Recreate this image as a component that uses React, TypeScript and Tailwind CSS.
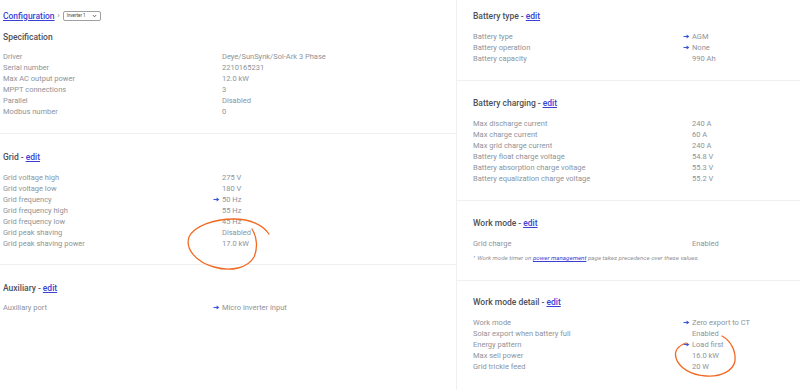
import React from "react";

type Row = { label: string; value: string; arrow?: boolean };

function Arrow() {
  return (
    <svg width="7" height="5" viewBox="0 0 7 5" className="mr-[2px] -ml-[9px] shrink-0">
      <path d="M0.5 2.5 H5" stroke="#3a56d4" strokeWidth="1.1" />
      <path d="M3.6 0.6 L6.4 2.5 L3.6 4.4 Z" fill="#3a56d4" />
    </svg>
  );
}

function Rows({ rows }: { rows: Row[] }) {
  return (
    <div className="flex flex-col">
      {rows.map((r) => (
        <div key={r.label} className="grid grid-cols-[219px_1fr] h-[11px] items-center text-[7.5px] leading-[11px] text-[#8e939a]">
          <div className="whitespace-nowrap">{r.label}</div>
          <div className="flex items-center whitespace-nowrap">
            {r.arrow && <Arrow />}
            <span>{r.value}</span>
          </div>
        </div>
      ))}
    </div>
  );
}

function Heading({ title, edit = true }: { title: string; edit?: boolean }) {
  return (
    <div className="h-[14px] flex items-center text-[8.5px] font-medium text-[#4d515a] whitespace-nowrap">
      <span>{title}</span>
      {edit && (
        <>
          <span className="ml-[2px]">-</span>
          <span className="ml-[2px] text-[#3b3fd6] underline underline-offset-[1px]">edit</span>
        </>
      )}
    </div>
  );
}

export default function App() {
  return (
    <div
      className="relative w-[800px] h-[390px] bg-white overflow-hidden flex"
      style={{ fontFamily: "Roboto, 'Liberation Sans', sans-serif" }}
    >
      {/* Left column */}
      <div className="w-[456px] shrink-0 flex flex-col">
        <div className="px-[3px] pt-[10px] pb-[16px] border-b border-[#f0f0f0]">
          <div className="h-[12px] flex items-center">
            <span className="text-[8.5px] font-medium text-[#3b3fd6] underline underline-offset-[1px]">Configuration</span>
            <span className="ml-[3px] text-[7px] text-[#777]">›</span>
            <div className="ml-[3px] h-[10px] w-[38px] border border-[#a0a0a0] rounded-[2px] flex items-center justify-between px-[3px] text-[4.5px] text-[#444]">
              <span>Inverter 1</span>
              <svg width="5" height="4" viewBox="0 0 5 4">
                <path d="M0.8 1 L2.5 2.8 L4.2 1" stroke="#444" strokeWidth="0.8" fill="none" />
              </svg>
            </div>
          </div>
          <div className="mt-[8px]">
            <Heading title="Specification" edit={false} />
          </div>
          <div className="mt-[7px]">
            <Rows
              rows={[
                { label: "Driver", value: "Deye/SunSynk/Sol-Ark 3 Phase" },
                { label: "Serial number", value: "2210165231" },
                { label: "Max AC output power", value: "12.0 kW" },
                { label: "MPPT connections", value: "3" },
                { label: "Parallel", value: "Disabled" },
                { label: "Modbus number", value: "0" },
              ]}
            />
          </div>
        </div>

        <div className="px-[3px] pt-[16px] pb-[15px] border-b border-[#f0f0f0]">
          <Heading title="Grid" />
          <div className="mt-[8px]">
            <Rows
              rows={[
                { label: "Grid voltage high", value: "275 V" },
                { label: "Grid voltage low", value: "180 V" },
                { label: "Grid frequency", value: "50 Hz", arrow: true },
                { label: "Grid frequency high", value: "55 Hz" },
                { label: "Grid frequency low", value: "45 Hz" },
                { label: "Grid peak shaving", value: "Disabled" },
                { label: "Grid peak shaving power", value: "17.0 kW" },
              ]}
            />
          </div>
        </div>

        <div className="px-[3px] pt-[16px]">
          <Heading title="Auxiliary" />
          <div className="mt-[7px]">
            <Rows rows={[{ label: "Auxiliary port", value: "Micro inverter input", arrow: true }]} />
          </div>
        </div>
      </div>

      {/* Right column */}
      <div className="flex-1 border-l border-[#f0f0f0] flex flex-col">
        <div className="pl-[16px] pt-[9px] pb-[16px] border-b border-[#f0f0f0]">
          <Heading title="Battery type" />
          <div className="mt-[8px]">
            <Rows
              rows={[
                { label: "Battery type", value: "AGM", arrow: true },
                { label: "Battery operation", value: "None", arrow: true },
                { label: "Battery capacity", value: "990 Ah" },
              ]}
            />
          </div>
        </div>

        <div className="pl-[16px] pt-[15px] pb-[16px] border-b border-[#f0f0f0]">
          <Heading title="Battery charging" />
          <div className="mt-[8px]">
            <Rows
              rows={[
                { label: "Max discharge current", value: "240 A" },
                { label: "Max charge current", value: "60 A" },
                { label: "Max grid charge current", value: "240 A" },
                { label: "Battery float charge voltage", value: "54.8 V" },
                { label: "Battery absorption charge voltage", value: "55.3 V" },
                { label: "Battery equalization charge voltage", value: "55.2 V" },
              ]}
            />
          </div>
        </div>

        <div className="pl-[16px] pt-[15px] pb-[16px] border-b border-[#f0f0f0]">
          <Heading title="Work mode" />
          <div className="mt-[8px]">
            <Rows rows={[{ label: "Grid charge", value: "Enabled" }]} />
          </div>
          <div className="mt-[4px] h-[11px] flex items-center text-[6.2px] italic text-[#8e939a] whitespace-nowrap">
            <span className="mr-[2px]">¹</span>
            <span>Work mode timer on&nbsp;</span>
            <span className="text-[#3b3fd6] underline">power management</span>
            <span>&nbsp;page takes precedence over these values.</span>
          </div>
        </div>

        <div className="pl-[16px] pt-[14px]">
          <Heading title="Work mode detail" />
          <div className="mt-[8px]">
            <Rows
              rows={[
                { label: "Work mode", value: "Zero export to CT", arrow: true },
                { label: "Solar export when battery full", value: "Enabled" },
                { label: "Energy pattern", value: "Load first", arrow: true },
                { label: "Max sell power", value: "16.0 kW" },
                { label: "Grid trickle feed", value: "20 W" },
              ]}
            />
          </div>
        </div>
      </div>

      {/* Hand-drawn annotations */}
      <svg className="absolute inset-0 pointer-events-none" width="800" height="390" viewBox="0 0 800 390">
        <path
          d="M269 234 C 263 225, 250 219, 234 219 C 214 219, 194 226, 189 237 C 185 249, 196 262, 214 267 C 231 272, 248 268, 254 257 C 258 248, 257 237, 252 229"
          stroke="#f26a21"
          strokeWidth="1.3"
          fill="none"
          strokeLinecap="round"
        />
        <path
          d="M722 336 C 731 341, 736 351, 735 361 C 733 371, 721 377, 706 376 C 691 375, 679 368, 676 358 C 674 351, 678 346, 686 343"
          stroke="#f26a21"
          strokeWidth="1.3"
          fill="none"
          strokeLinecap="round"
        />
      </svg>
    </div>
  );
}
